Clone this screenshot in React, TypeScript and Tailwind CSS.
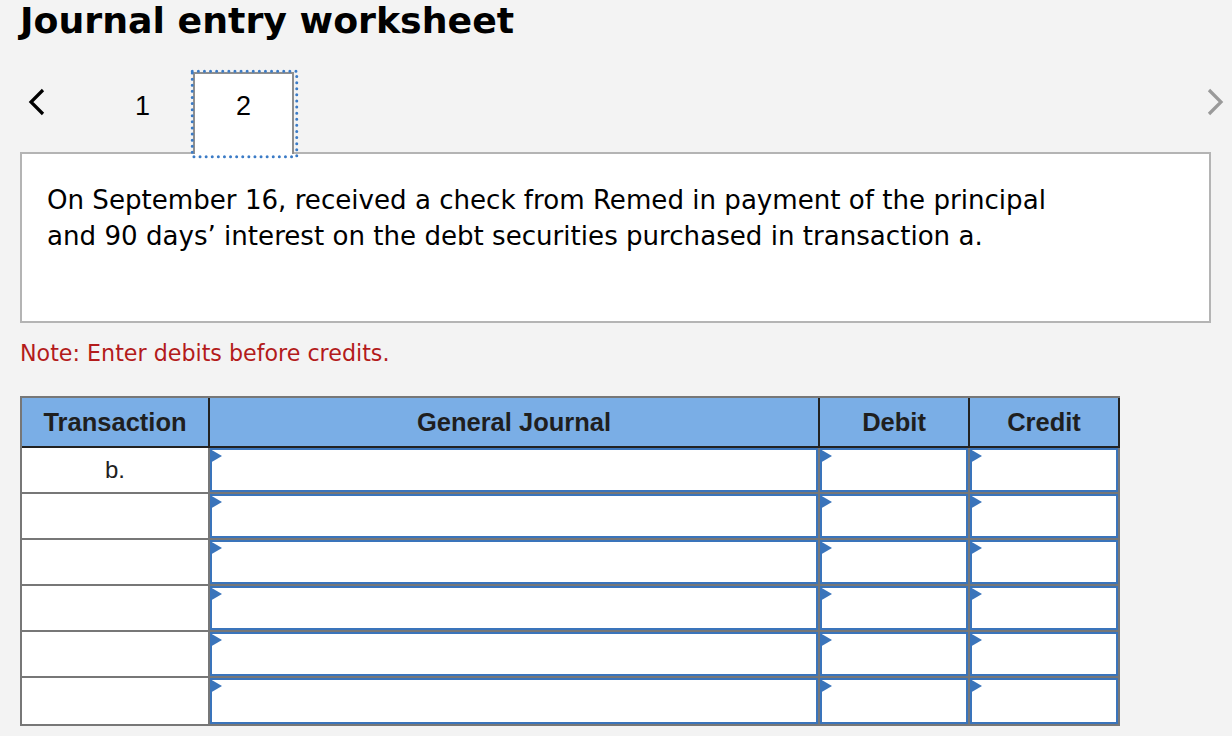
import React from "react";

const verdana = { fontFamily: '"DejaVu Sans", Verdana, sans-serif' };
const arial = { fontFamily: '"Liberation Sans", Arial, sans-serif' };

const columns = [
  { label: "Transaction", width: "w-[188px]" },
  { label: "General Journal", width: "w-[610px]" },
  { label: "Debit", width: "w-[150px]" },
  { label: "Credit", width: "w-[150px]" },
];

const rows = ["b.", "", "", "", "", ""];

// Blue-bordered entry box with the little marker at its top-left corner
function EntryCell({ width }: { width: string }) {
  return (
    <div className={`${width} h-full border-r-2 border-[#777777] shrink-0`}>
      <div className="relative h-full border-2 border-[#3a74bb] bg-white">
        <svg
          className="absolute -left-[2px] -top-[1px]"
          width="12"
          height="14"
          viewBox="0 0 12 14"
        >
          <polygon points="0,0 12,7 0,14" fill="#3a74bb" />
        </svg>
      </div>
    </div>
  );
}

export default function App() {
  return (
    <div className="min-h-screen w-full bg-[#f3f3f3] text-black">
      {/* Title */}
      <div className="h-[40px] px-[20px] pt-[3px]">
        <h1 className="text-[36.3px] font-bold leading-none" style={verdana}>
          Journal entry worksheet
        </h1>
      </div>

      {/* Tabs */}
      <div className="mt-[32px] -mb-[2px] flex h-[82px] pl-[20px] pr-[8px]">
        <button className="flex h-full w-[72px] items-start pt-[16px]">
          <svg className="ml-[8px]" width="18" height="28" viewBox="0 0 18 28">
            <polyline
              points="15,2 3,14 15,26"
              fill="none"
              stroke="#000"
              strokeWidth="3.2"
            />
          </svg>
        </button>
        <div
          className="h-full w-[101px] border-2 border-b-0 border-transparent pt-[19px] text-center text-[27px] leading-none"
          style={arial}
        >
          1
        </div>
        <div
          className="relative z-10 h-full w-[101px] border-2 border-b-0 border-[#8f8f8f] bg-white pt-[19px] text-center text-[27px] leading-none"
          style={arial}
        >
          2
          {/* focus ring */}
          <svg
            className="pointer-events-none absolute -left-[5px] -top-[5px]"
            width="109"
            height="90"
            viewBox="0 0 109 90"
          >
            <rect
              x="2.25"
              y="2.25"
              width="104.5"
              height="85.5"
              fill="none"
              stroke="#3b7bc6"
              strokeWidth="3"
              strokeDasharray="0 6.1"
              strokeLinecap="round"
            />
          </svg>
        </div>
        <button className="ml-auto flex h-full items-start pt-[16px]">
          <svg width="18" height="28" viewBox="0 0 18 28">
            <polyline
              points="3,2 15,14 3,26"
              fill="none"
              stroke="#9a9a9a"
              strokeWidth="3.2"
            />
          </svg>
        </button>
      </div>

      <div className="px-[20px]">
        {/* Question */}
        <div
          className="h-[171px] w-[1191px] border-2 border-[#b4b4b4] bg-white pl-[25px] pt-[28px] text-[26.1px] leading-[36px]"
          style={verdana}
        >
          On September 16, received a check from Remed in payment of the principal
          <br />
          and 90 days’ interest on the debt securities purchased in transaction a.
        </div>

        <p className="mt-[19px] text-[22.2px] leading-none text-[#b31b1b]" style={verdana}>
          Note: Enter debits before credits.
        </p>

        {/* Journal table */}
        <div className="mt-[32px] w-[1100px] border-b-2 border-l-2 border-t-2 border-[#777777]" style={arial}>
          <div className="flex h-[50px] border-b-2 border-[#222222] bg-[#7aaee6]">
            {columns.map((c) => (
              <div
                key={c.label}
                className={`${c.width} flex shrink-0 items-center justify-center border-r-2 border-[#222222] text-[25.5px] font-bold text-[#1f1f1f]`}
              >
                {c.label}
              </div>
            ))}
          </div>
          {rows.map((r, i) => (
            <div
              key={i}
              className={`flex h-[46px] ${i < rows.length - 1 ? "border-b-2 border-[#777777]" : "h-[44px]"}`}
            >
              <div className="flex w-[188px] shrink-0 items-center justify-center border-r-2 border-[#777777] bg-white text-[24px] text-[#1f1f1f]">
                {r}
              </div>
              <EntryCell width="w-[610px]" />
              <EntryCell width="w-[150px]" />
              <EntryCell width="w-[150px]" />
            </div>
          ))}
        </div>
      </div>
    </div>
  );
}
